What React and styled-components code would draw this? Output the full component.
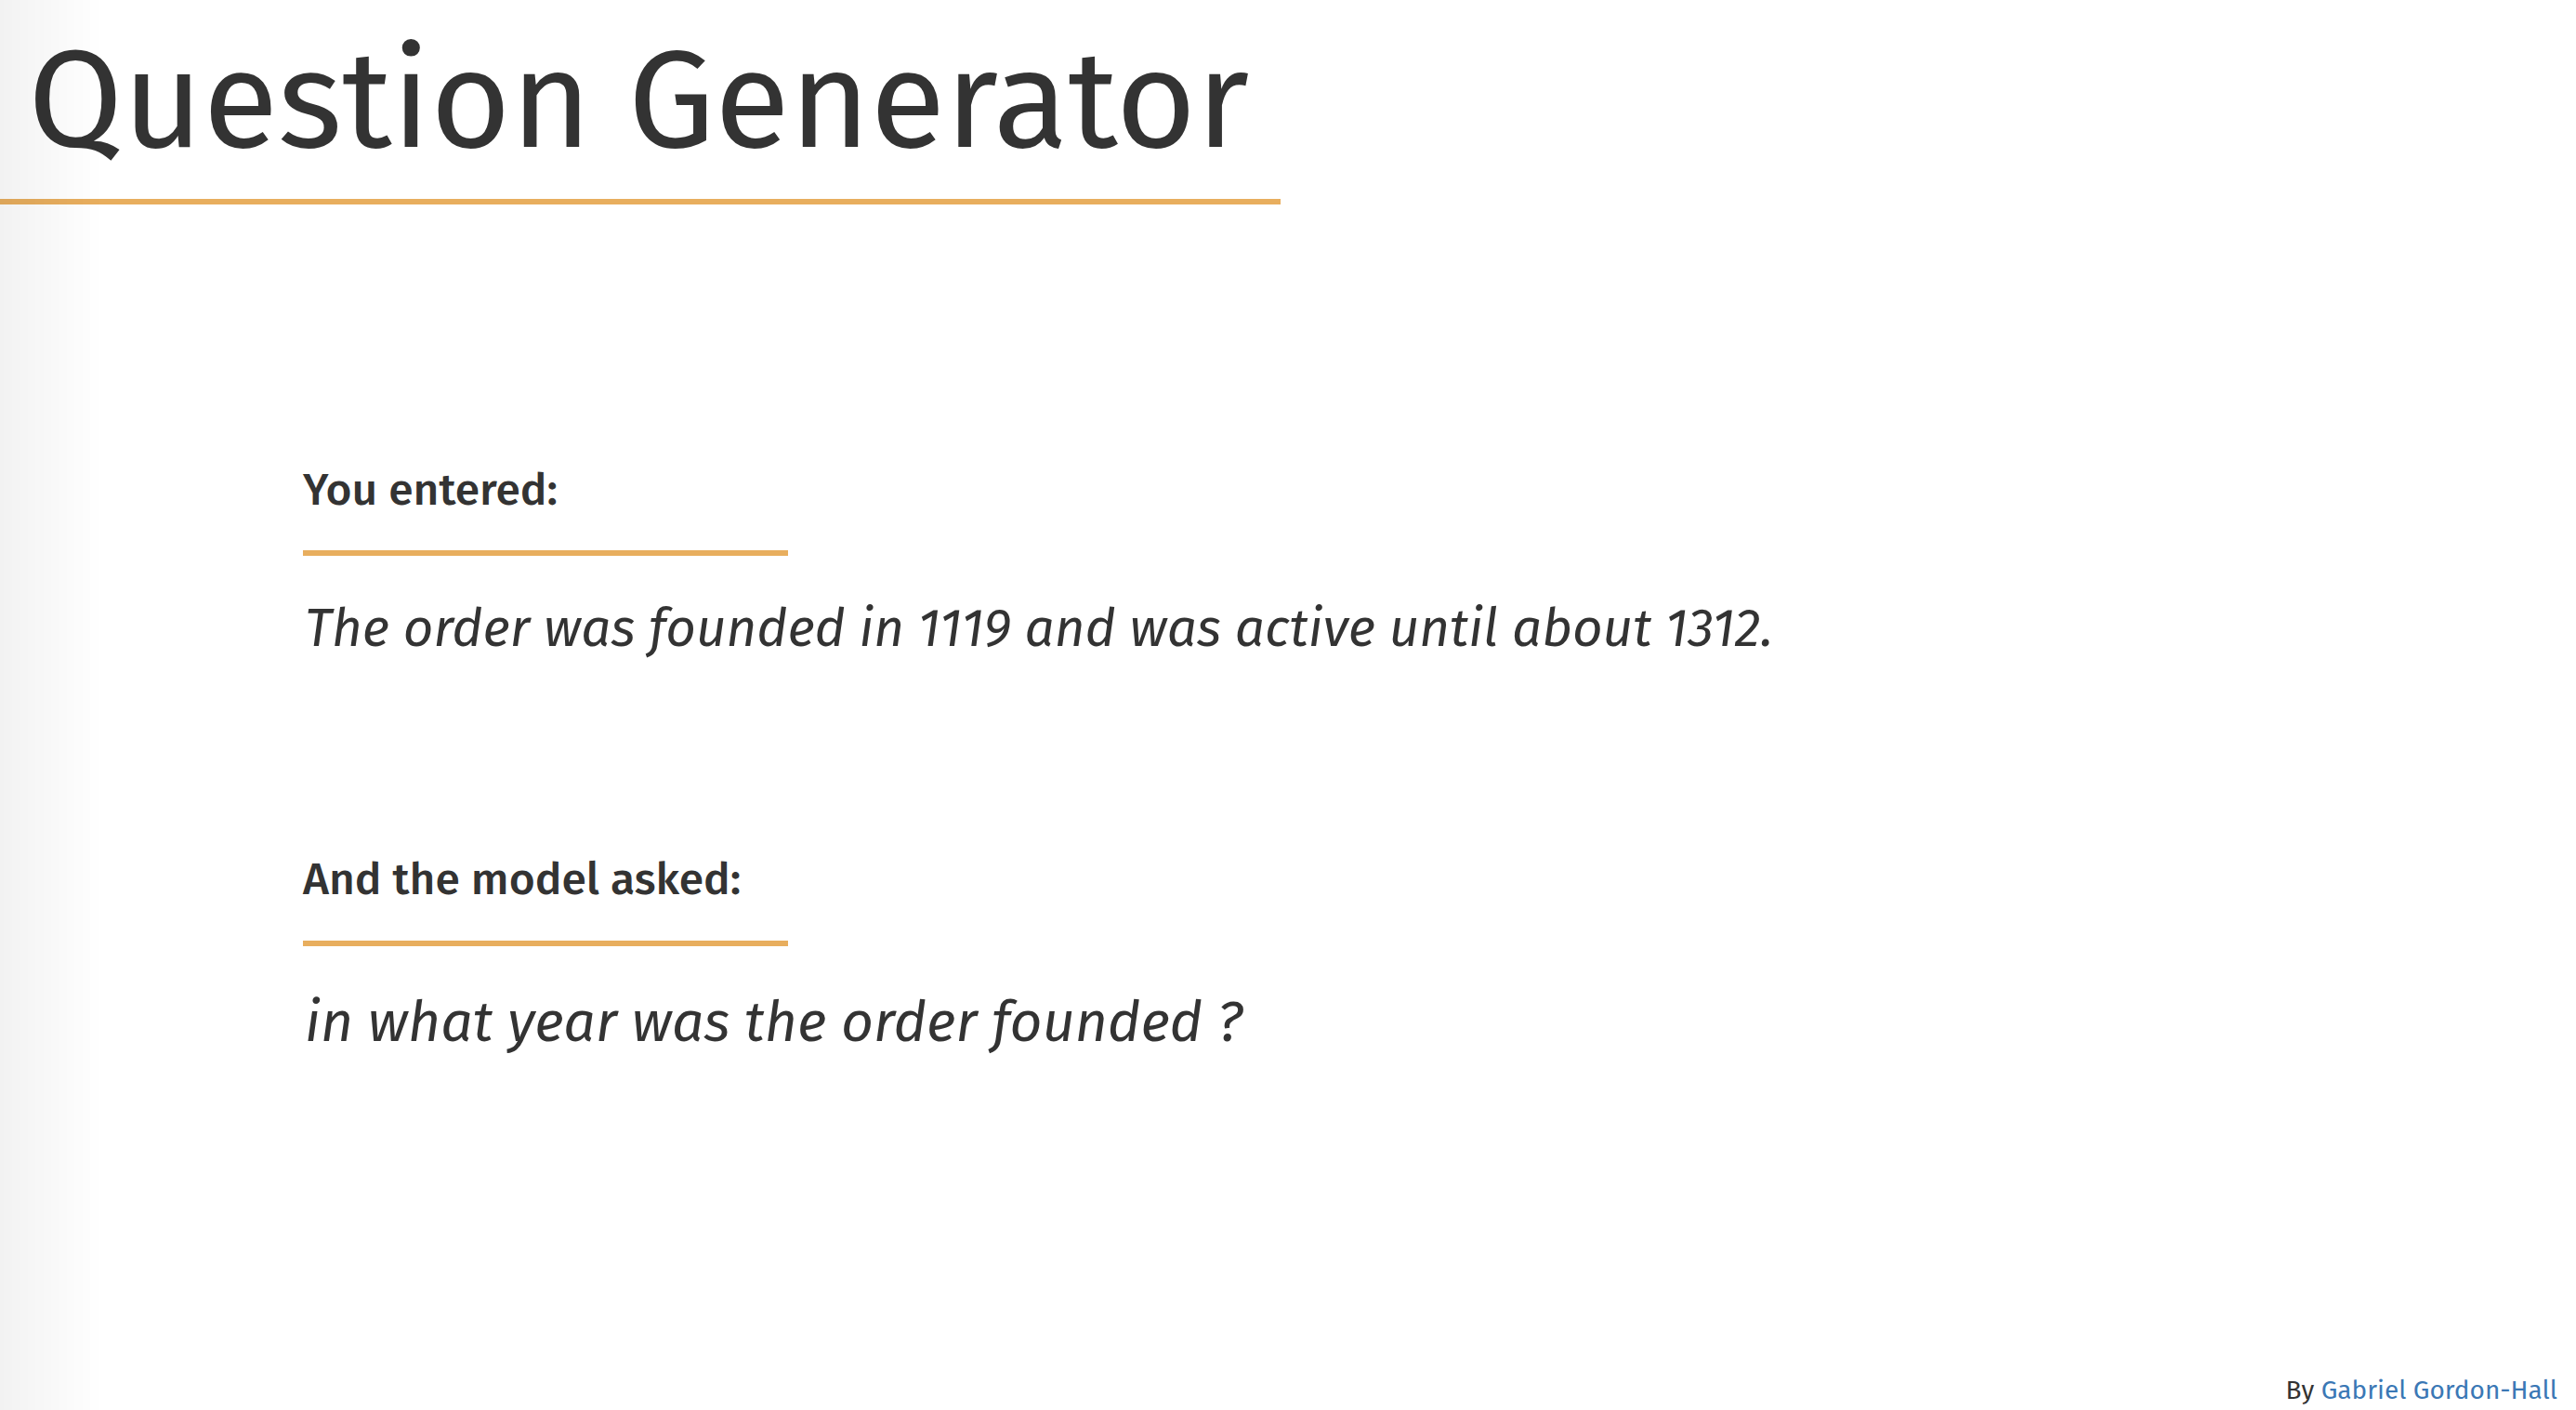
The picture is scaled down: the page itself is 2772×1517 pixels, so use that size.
import React from 'react';
import styled, { createGlobalStyle } from 'styled-components';

const ORANGE = '#e8ae5e';
const INK = '#333333';

const GlobalStyle = createGlobalStyle`
  html, body {
    margin: 0;
    padding: 0;
    background: #ffffff;
  }
  body {
    font-family: "Fira Sans", "Open Sans", "Noto Sans", sans-serif;
    color: ${INK};
  }
`;

const Page = styled.div`
  min-height: 100vh;
  display: flex;
  flex-direction: column;
  box-sizing: border-box;

  /* soft shade along the left edge, sits over the content */
  &::after {
    content: '';
    position: fixed;
    top: 0;
    left: 0;
    bottom: 0;
    width: 110px;
    pointer-events: none;
    background: linear-gradient(to right, rgba(0, 0, 0, 0.05), rgba(0, 0, 0, 0));
  }
`;

const Header = styled.header`
  width: 1378px;
  box-sizing: border-box;
  padding: 20px 0 16px 30px;
  border-bottom: 6px solid ${ORANGE};
`;

const Title = styled.h1`
  margin: 0;
  font-size: 148px;
  line-height: 1.2;
  font-weight: 400;
  color: ${INK};
`;

const Main = styled.main`
  flex: 1;
  padding: 279px 0 0 326px;
  display: flex;
  flex-direction: column;
`;

const Block = styled.section`
  display: flex;
  flex-direction: column;
  align-items: flex-start;
  margin-bottom: ${(p) => p.$after || 0}px;
`;

const Label = styled.h4`
  margin: 0;
  width: 522px;
  box-sizing: border-box;
  padding-bottom: 36px;
  border-bottom: 6px solid ${ORANGE};
  font-size: 48px;
  line-height: 1.2;
  font-weight: 500;
  color: ${INK};
`;

const Answer = styled.p`
  margin: ${(p) => p.$gap}px 0 0 2px;
  font-size: ${(p) => p.$size}px;
  line-height: 1.2;
  font-style: italic;
  font-weight: 400;
  color: ${INK};
`;

const Footer = styled.footer`
  display: flex;
  justify-content: flex-end;
  padding: 0 20px 4px 0;
  font-size: 28px;
  line-height: 1.2;
  color: ${INK};
`;

const Link = styled.a`
  color: #3b78b5;
  text-decoration: none;
`;

export default function App() {
  return (
    <Page>
      <GlobalStyle />
      <Header>
        <Title>Question Generator</Title>
      </Header>
      <Main>
        <Block $after={207}>
          <Label>You entered:</Label>
          <Answer $gap={45} $size={56.6}>
            The order was founded in 1119 and was active until about 1312.
          </Answer>
        </Block>
        <Block>
          <Label>And the model asked:</Label>
          <Answer $gap={46} $size={60.7}>
            in what year was the order founded ?
          </Answer>
        </Block>
      </Main>
      <Footer>
        <span>
          By <Link href="#">Gabriel Gordon-Hall</Link>
        </span>
      </Footer>
    </Page>
  );
}
